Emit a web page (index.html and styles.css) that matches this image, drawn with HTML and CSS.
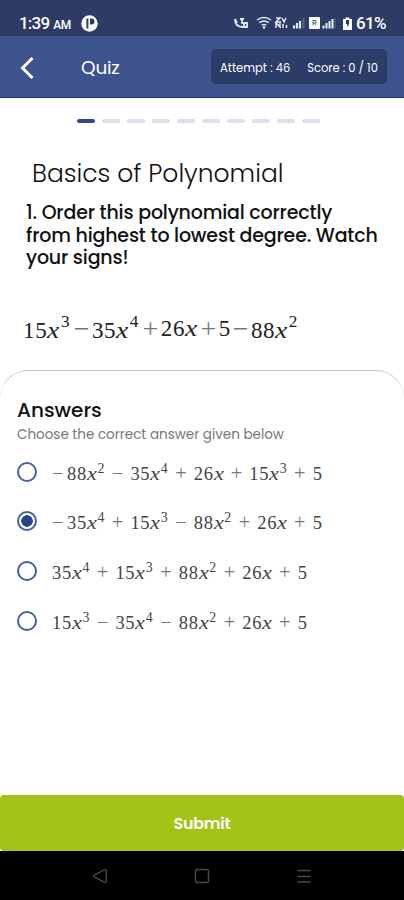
FILE: index.html
```html
<!DOCTYPE html>
<html lang="en">
<head>
    <meta charset="UTF-8">
    <meta name="viewport" content="width=device-width, initial-scale=1.0">
    <title>Quiz</title>
    <link rel="stylesheet" href="styles.css">
</head>
<body>
    <div class="status-bar">
        <span class="time">1:39<small>AM</small></span>
        <svg class="app-icon" width="17" height="17" viewBox="0 0 17 17">
            <circle cx="8.5" cy="8.5" r="8.2" fill="#fff"/>
            <path d="M6.4 3.5v10" stroke="#2d3b65" stroke-width="2"/>
            <path d="M9 3.500h1.500q3 0 3 3t-3 3H9z" fill="#2d3b65"/>
        </svg>
        <svg class="status-icons" width="122" height="18" viewBox="0 0 122 18" fill="none" stroke="#e4e9f7">
            <path d="M3 5c0 5 3 8 8 8M3 5l2 4M8 5h4M10 5v5M12 9h3v4h-3z" stroke-width="1.800"/>
            <path d="M25 6q7-5 14 0M27.300 8.700q4.700-3.500 9.400 0M29.700 11.300q2.300-1.600 4.600 0" stroke-width="1.500"/>
            <circle cx="32" cy="13.500" r="1.200" fill="#fff" stroke="none"/>
            <path d="M44 4h4l-4 4h5M50 4l2 4 2-4M44 14V9l4 4V9M51 14v-4M54.500 14v-3" stroke-width="1.500"/>
            <path d="M62 14.500v-3M65 14.500V9M68 14.500V7" stroke-width="2.200"/>
            <path d="M71.500 14.500V4" stroke="#56648c" stroke-width="2"/>
            <rect x="77" y="3" width="11" height="12" rx="1" fill="#fff" stroke="none"/>
            <path d="M81 11.500V6.500h3v2.500h-3M82.500 9l1.500 2.500" stroke="#59647f" stroke-width="1"/>
            <path d="M91.500 14.500v-3M94.500 14.500V9M97.500 14.500V7M100.500 14.500V5" stroke-width="2.100"/>
            <path d="M103 14.500V4" stroke="#56648c" stroke-width="1"/>
            <path d="M111 5h2.500V3.500h4V5h2.500v11h-9z" fill="#fff" stroke="none"/>
            <path d="M114 6h3v4l-1.500 3-.5-3h-1z" fill="#2d3b65" stroke="none"/>
        </svg>
        <span class="battery">61%</span>
    </div>

    <div class="header">
        <svg class="back" width="16" height="24" viewBox="0 0 16 24">
            <path d="M13.500 2L3.500 12l10 10" fill="none" stroke="#fff" stroke-width="3"/>
        </svg>
        <span class="header-title">Quiz</span>
        <div class="stats">
            <span class="attempt">Attempt : 46</span>
            <span class="score">Score : 0 / 10</span>
        </div>
    </div>

    <div class="progress">
        <span class="active"></span>
        <span></span>
        <span></span>
        <span></span>
        <span></span>
        <span></span>
        <span></span>
        <span></span>
        <span></span>
        <span></span>
    </div>

    <div class="question">
        <h1>Basics of Polynomial</h1>
        <p>1. Order this polynomial correctly<br>from highest to lowest degree. Watch<br>your signs!</p>
        <div class="math expression">
            <span class="term">15<i>x</i><sup>3</sup></span><b>−</b><span class="term">35<i>x</i><sup>4</sup></span><b>+</b><span class="term up">26<i>x</i></span><b>+</b><span class="term up">5</span><b>−</b><span class="term">88<i>x</i><sup>2</sup></span>
        </div>
    </div>

    <div class="answers">
        <h2>Answers</h2>
        <p class="hint">Choose the correct answer given below</p>

        <label class="option">
            <input type="radio" name="answer">
            <span class="math"><b class="sign">−</b><span class="term">88<i>x</i><sup>2</sup></span><b>−</b><span class="term">35<i>x</i><sup>4</sup></span><b>+</b><span class="term">26<i>x</i></span><b>+</b><span class="term">15<i>x</i><sup>3</sup></span><b>+</b><span class="term">5</span></span>
        </label>
        <label class="option">
            <input type="radio" name="answer" checked>
            <span class="math"><b class="sign">−</b><span class="term">35<i>x</i><sup>4</sup></span><b>+</b><span class="term">15<i>x</i><sup>3</sup></span><b>−</b><span class="term">88<i>x</i><sup>2</sup></span><b>+</b><span class="term">26<i>x</i></span><b>+</b><span class="term">5</span></span>
        </label>
        <label class="option">
            <input type="radio" name="answer">
            <span class="math"><span class="term">35<i>x</i><sup>4</sup></span><b>+</b><span class="term">15<i>x</i><sup>3</sup></span><b>+</b><span class="term">88<i>x</i><sup>2</sup></span><b>+</b><span class="term">26<i>x</i></span><b>+</b><span class="term">5</span></span>
        </label>
        <label class="option">
            <input type="radio" name="answer">
            <span class="math"><span class="term">15<i>x</i><sup>3</sup></span><b>−</b><span class="term">35<i>x</i><sup>4</sup></span><b>−</b><span class="term">88<i>x</i><sup>2</sup></span><b>+</b><span class="term">26<i>x</i></span><b>+</b><span class="term">5</span></span>
        </label>
    </div>

    <button type="submit" class="btn-submit">Submit</button>

    <div class="nav-bar">
        <svg width="16" height="16" viewBox="0 0 16 16">
            <path d="M13 1.500L2.200 7.200q-1 .8 0 1.600L13 14.500q1.200 0 1.200-1.200V2.700q0-1.200-1.200-1.200z"/>
        </svg>
        <svg width="16" height="16" viewBox="0 0 16 16">
            <rect x="1.500" y="1.500" width="13" height="13" rx="1.500"/>
        </svg>
        <svg width="16" height="16" viewBox="0 0 16 16">
            <path d="M1.500 2.500h13M1.500 8.500h13M1.500 14h13"/>
        </svg>
    </div>
</body>
</html>
```

FILE: styles.css
```css
*{
    padding: 0;
    margin: 0;
    box-sizing: border-box;
}

body{
    height: 100vh;
    background: #fff;
    overflow: hidden;
    display: flex;
    flex-direction: column;
    font-family: Poppins, Inter, sans-serif;
    color: #111;
}

.status-bar {
    height: 36px;
    flex-shrink: 0;
    display: flex;
    align-items: center;
    padding: 10px 17px 0 19px;
    background: #2d3b65;
    color: #fff;
    font-family: Roboto, sans-serif;
    font-size: 17px;
    font-weight: 500;
    white-space: nowrap;
}

.time {
    width: 62px;
    letter-spacing: -0.8px;
}

.time small {
    font-size: 12px;
    margin-left: 4px;
    letter-spacing: -0.5px;
}

.status-icons {
    margin-left: auto;
    margin-right: 2px;
}

.battery {
    width: 31px;
    letter-spacing: -0.6px;
}

.header {
    height: 62px;
    flex-shrink: 0;
    display: flex;
    align-items: center;
    padding: 0 17px 0 19px;
    background: #3e528d;
    border-bottom: 1px solid #183572;
    color: #fff;
}

.back {
    margin-top: 2px;
}

.header-title {
    margin-left: 46px;
    padding-top: 2px;
    font-size: 18.500px;
    letter-spacing: -0.2px;
}

.stats {
    width: 176px;
    height: 35px;
    margin-left: auto;
    padding: 3px 9px 0;
    display: flex;
    align-items: center;
    justify-content: space-between;
    border-radius: 5px;
    background: #2c3c69;
    font-size: 11.500px;
    white-space: nowrap;
}

.progress {
    display: flex;
    gap: 7px;
    padding: 21px 0 0 77px;
}

.progress span {
    width: 18px;
    height: 4px;
    border-radius: 2px;
    background: #dcdfed;
}

.progress .active {
    background: #2f4a88;
}

.question {
    height: 247px;
    padding: 36px 20px 0 26px;
}

.question h1 {
    padding-left: 6px;
    font-size: 25px;
    line-height: 30px;
    font-weight: 300;
    white-space: nowrap;
}

.question p {
    margin-top: 13px;
    font-size: 19px;
    line-height: 22.500px;
    font-weight: 500;
    letter-spacing: -0.18px;
    white-space: nowrap;
}

.math {
    display: flex;
    align-items: baseline;
    font-family: "Liberation Serif", serif;
    font-size: 18.500px;
    line-height: 24px;
    letter-spacing: 0.7px;
    color: #444;
}

.math i {
    display: inline-block;
    width: 10.500px;
    transform: scaleX(1.2);
    transform-origin: left;
}

.math sup {
    display: inline-block;
    width: 8px;
    font-size: 0.75em;
    line-height: 0;
    vertical-align: 0.5em;
}

.math b {
    width: 25px;
    text-align: center;
    font-size: 1.1em;
    font-weight: normal;
    color: #777;
}

.math .sign {
    width: 15px;
    text-align: left;
}

.expression {
    margin: 47px 0 0 -3px;
    font-size: 23px;
    color: #222;
}

.expression i {
    width: 13.500px;
}

.expression sup {
    width: 11px;
    vertical-align: 0.6em;
}

.expression b {
    width: 20px;
    font-size: 28px;
}

.expression .up {
    padding-bottom: 2px;
    transform: translateY(-2px);
}

.answers {
    flex: 1;
    padding: 26px 17px 0;
    border-top: 1.500px solid #c4c4c4;
    border-radius: 28px 28px 0 0;
}

.answers h2 {
    font-size: 20px;
    line-height: 26px;
    font-weight: 500;
}

.hint {
    margin: 2px 0;
    font-size: 13.500px;
    line-height: 20px;
    color: #777;
}

.option {
    display: flex;
    align-items: center;
    height: 49.600px;
}

.option input {
    appearance: none;
    width: 20px;
    height: 20px;
    margin-right: 15px;
    border: 2px solid #4560a0;
    border-radius: 50%;
}

.option .math {
    padding-top: 3px;
}

.option input:checked {
    background: radial-gradient(circle, #28458a 5.500px, #fff 6px);
}

.btn-submit {
    height: 56px;
    flex-shrink: 0;
    border: none;
    border-radius: 4px;
    background: #a3c416;
    color: #fff;
    font-family: inherit;
    font-size: 16px;
    font-weight: 600;
    letter-spacing: -0.3px;
}

.nav-bar {
    height: 49px;
    flex-shrink: 0;
    display: flex;
    justify-content: space-between;
    padding: 17px 92px 0;
    background: #000;
}

.nav-bar svg {
    fill: none;
    stroke: #494949;
    stroke-width: 1.400;
}
```
